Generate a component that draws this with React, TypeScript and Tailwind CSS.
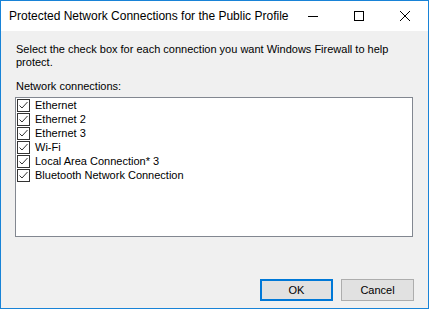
import React from 'react';

const connections = [
  'Ethernet',
  'Ethernet 2',
  'Ethernet 3',
  'Wi-Fi',
  'Local Area Connection* 3',
  'Bluetooth Network Connection',
];

const CheckBox: React.FC = () => (
  <span className="w-[13px] h-[13px] border border-[#333333] bg-white flex items-center justify-center shrink-0">
    <svg width="11" height="11" viewBox="0 0 11 11">
      <path d="M1.5 5.5 L4 8 L9.5 2" fill="none" stroke="#333333" strokeWidth="1" />
    </svg>
  </span>
);

const App: React.FC = () => {
  return (
    <div className="w-[429px] h-[309px] border border-[#1883d7] flex flex-col bg-[#f0f0f0] font-['Liberation_Sans',sans-serif]">
      {/* Title bar */}
      <div className="h-[30px] bg-white flex items-center shrink-0">
        <div className="flex-1 pl-[8px] text-[12px] text-black whitespace-nowrap">
          Protected Network Connections for the Public Profile
        </div>
        <div className="w-[46px] h-[30px] flex items-center justify-center">
          <svg width="10" height="10" viewBox="0 0 10 10">
            <path d="M0 5.5 H10" stroke="#000" strokeWidth="1" />
          </svg>
        </div>
        <div className="w-[46px] h-[30px] flex items-center justify-center">
          <svg width="10" height="10" viewBox="0 0 10 10">
            <rect x="0.5" y="0.5" width="9" height="9" fill="none" stroke="#000" strokeWidth="1" />
          </svg>
        </div>
        <div className="w-[46px] h-[30px] flex items-center justify-center">
          <svg width="10" height="10" viewBox="0 0 10 10">
            <path d="M0 0 L10 10 M10 0 L0 10" stroke="#000" strokeWidth="1" />
          </svg>
        </div>
      </div>

      {/* Body */}
      <div className="flex-1 flex flex-col px-[14px] pt-[12px] pb-[7px] text-[11px] leading-[13px] text-black">
        <p className="pl-[1px]">
          Select the check box for each connection you want Windows Firewall to help protect.
        </p>
        <p className="pl-[1px] mt-[11px]">Network connections:</p>
        <div className="mt-[4px] w-[398px] h-[140px] border border-[#828790] bg-white flex flex-col">
          {connections.map((c) => (
            <div key={c} className="h-[14px] flex items-center pl-[1px]">
              <CheckBox />
              <span className="ml-[5px]">{c}</span>
            </div>
          ))}
        </div>
        <div className="flex-1" />
        <div className="flex justify-end gap-[8px]">
          <button className="w-[73px] h-[22px] border-2 border-[#0078d7] bg-[#e1e1e1] text-[11px]">OK</button>
          <button className="w-[73px] h-[22px] border border-[#adadad] bg-[#e1e1e1] text-[11px]">Cancel</button>
        </div>
      </div>
    </div>
  );
};

export default App;
